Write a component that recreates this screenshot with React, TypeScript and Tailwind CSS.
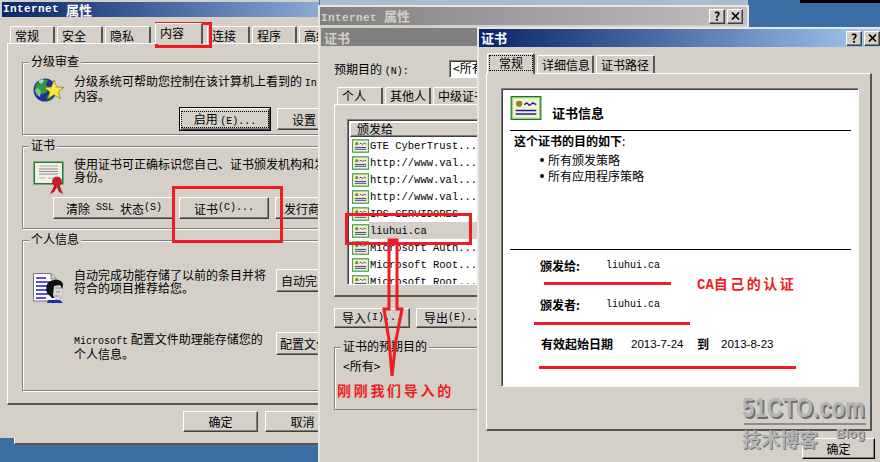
import type { ReactNode } from "react";

const raised =
  "bg-[#d4d0c8] border-t border-l border-t-white border-l-white border-r border-b border-r-[#404040] border-b-[#404040] shadow-[inset_-1px_-1px_0_#808080]";
const etched =
  "border border-[#808080] shadow-[1px_1px_0_#fff,inset_1px_1px_0_#fff]";
const sunken =
  "bg-white border-t border-l border-t-[#808080] border-l-[#808080] border-r border-b border-r-white border-b-white shadow-[inset_1px_1px_0_#404040]";

// latin text in the old dialogs is narrower than the CJK text around it
function L({ children }: { children: ReactNode }) {
  return <span className="font-['Liberation_Mono',monospace] text-[10px] leading-none">{children}</span>;
}

function Btn({ children, className = "" }: { children: ReactNode; className?: string }) {
  return (
    <div className={`${raised} flex shrink-0 items-center justify-center whitespace-nowrap text-[12px] text-black ${className}`}>
      {children}
    </div>
  );
}

function Tab({ children, active, className = "" }: { children: ReactNode; active?: boolean; className?: string }) {
  return (
    <div
      className={`flex shrink-0 items-center justify-start whitespace-nowrap rounded-t-[2px] border-t border-l border-t-white border-l-white border-r-2 border-r-[#555] bg-[#d4d0c8] pl-[4px] text-[12px] text-black ${
        active ? "relative z-10 -mb-[1px] h-[21px] pb-[3px]" : "h-[17px]"
      } ${className}`}
    >
      {children}
    </div>
  );
}

function Group({ title, className = "", children }: { title: string; className?: string; children: ReactNode }) {
  return (
    <div className={`relative shrink-0 ${etched} ${className}`}>
      <span className="absolute -top-[9px] left-[6px] whitespace-nowrap bg-[#d4d0c8] px-[2px] text-[12px] leading-[14px] text-black">
        {title}
      </span>
      {children}
    </div>
  );
}

function TitleButtons() {
  return (
    <div className="flex gap-[2px]">
      <Btn className="h-[15px] w-[16px] text-[11px] font-bold">?</Btn>
      <Btn className="h-[15px] w-[16px]">
        <svg width="9" height="8" viewBox="0 0 9 8" stroke="#000" strokeWidth="1.6">
          <path d="M1 0.5 8 7.5M8 0.5 1 7.5" />
        </svg>
      </Btn>
    </div>
  );
}

function GlobeIcon() {
  return (
    <svg width="32" height="26" viewBox="0 0 32 26">
      <circle cx="12" cy="13" r="11.5" fill="#1c2f9c" />
      <path d="M3 7 9 2l6 1-2 5 3 3-3 5-5 1-3-3-3-2z" fill="#2e9a3a" />
      <path d="M1.500 13 5 11l3 3-1 6-3-2z" fill="#7ec87a" />
      <path d="M5 4l4-2 2 2-3 3z" fill="#b8c8e8" />
      <path d="M13 19l6-2 1 4-6 3z" fill="#0d7a2a" />
      <path
        d="M21 3l2.700 7 7.300.4-5.700 4.400 2 7-6.300-4-6.300 4 2-7-5.700-4.400 7.300-.4z"
        fill="#f6e93a"
        stroke="#6a6a20"
        strokeWidth="0.6"
      />
    </svg>
  );
}

function CertIcon() {
  return (
    <svg width="32" height="34" viewBox="0 0 32 34">
      <rect x="0.500" y="0.500" width="30" height="23" fill="#1e7d32" />
      <rect x="2" y="2" width="27" height="20" fill="#f2f0e6" />
      <path d="M6 5h19" stroke="#a8a8a8" />
      <path d="M6 8h19M6 10.500h19M6 13h19" stroke="#8a8a8a" />
      <path d="M6 17h6M15 17h6" stroke="#b0b0b0" />
      <path d="M17 33l5-10 3 1-4 7zM30 33l-4-10-3 1 3 7z" fill="#c3122a" />
      <circle cx="24" cy="20.500" r="4.500" fill="#d8152e" stroke="#7d0a18" strokeWidth="0.6" />
    </svg>
  );
}

function ProfileIcon() {
  return (
    <svg width="32" height="31" viewBox="0 0 32 31">
      <path d="M0.500.5H18l5 5V28H.5z" fill="#fff" stroke="#777" />
      <path d="M18 .5V6h5" fill="#d0d0d0" stroke="#777" />
      <path d="M3 5h10M3 9h14M3 13h14M3 17h14M3 21h14M3 25h10" stroke="#1a1ae0" strokeWidth="1.400" />
      <path d="M15 27l-1 3h16l-3-3z" fill="#1c2fa8" />
      <path d="M14 20c-2-7 0-12 7-13 6-1 9 2 9 5l-2 13h-9z" fill="#111" />
      <path d="M21 13c2 0 4-1 6-1l3 5-1 1 0 5-3 3h-4l-2-4z" fill="#d8d8d8" />
      <path d="M22 15h6M23 19h4M22 23h4" stroke="#8a8a8a" />
    </svg>
  );
}

function SmallCert({ w = 17, h = 14 }: { w?: number; h?: number }) {
  return (
    <svg width={w} height={h} viewBox="0 0 18 14" className="shrink-0">
      <rect width="18" height="14" fill="#0d7d1d" />
      <rect x="1" y="1" width="16" height="12" fill="#f4f4c8" stroke="#9fd08f" strokeWidth="0.700" />
      <circle cx="5" cy="4.500" r="1.800" fill="#86862a" />
      <path d="M8 5l1.500-1 1.500 1.500L13 4l2 1" stroke="#1a1ab0" fill="none" strokeWidth="0.800" />
      <path d="M3 8.500h12M3 10.500h12" stroke="#1a1ab0" strokeWidth="0.900" />
    </svg>
  );
}

function ContentWindow() {
  return (
    <div className="absolute left-0 top-0 flex h-[438px] w-[319px] flex-col overflow-hidden border-l-2 border-l-[#d4d0c8] bg-[#d4d0c8] pt-[2px] text-[12px] leading-[13px] text-black">
      <div className="flex h-[15px] shrink-0 items-center bg-linear-to-r from-[#0a246a] to-[#8ca9d3] pb-[1px] pl-[1px] text-[13px] font-bold text-white">
        <span className="font-['Liberation_Mono',monospace] text-[11px] tracking-[0.4px]">Internet</span>
        <span className="ml-[7px]">属性</span>
      </div>
      <div className="flex h-[26px] shrink-0 items-end gap-[2px] pl-[8px]">
        <Tab className="w-[45px]">常规</Tab>
        <Tab className="w-[46px]">安全</Tab>
        <Tab className="mr-[2px] w-[46px]">隐私</Tab>
        <Tab active className="w-[48px]">内容</Tab>
        <Tab className="ml-[2px] w-[43px]">连接</Tab>
        <Tab className="w-[45px]">程序</Tab>
        <Tab className="w-[46px]">高级</Tab>
      </div>
      <div className="ml-[5px] flex h-[362px] w-[340px] shrink-0 flex-col border-t border-l border-t-white border-l-white border-b-2 border-b-[#555] px-[14px]">
        <Group title="分级审查" className="mt-[18px] h-[73px]">
          <div className="flex pl-[10px] pt-[11px]">
            <div className="mt-[3px] h-[23px] w-[41px] shrink-0">
              <GlobeIcon />
            </div>
            <p className="w-[250px] shrink-0">
              分级系统可帮助您控制在该计算机上看到的 <L>In</L>
              <br />
              内容。
            </p>
          </div>
          <div className="mt-[6px] flex gap-[7px] pl-[157px]">
            <Btn className="h-[22px] w-[90px] outline outline-1 outline-black">
              <span className="border border-dotted border-black px-[12px] leading-[14px]">
                启用 <L>(E)...</L>
              </span>
            </Btn>
            <Btn className="h-[22px] w-[54px] text-[#808080]">设置</Btn>
          </div>
        </Group>
        <Group title="证书" className="mt-[11px] h-[83px]">
          <div className="flex pl-[10px] pt-[10px]">
            <div className="mt-[4px] h-[22px] w-[41px] shrink-0">
              <CertIcon />
            </div>
            <p className="w-[250px] shrink-0 whitespace-nowrap">
              使用证书可正确标识您自己、证书颁发机构和发
              <br />
              身份。
            </p>
          </div>
          <div className="mt-[14px] flex gap-[4px] pl-[30px]">
            <Btn className="h-[22px] w-[122px]">
              清除 <L>&nbsp;SSL&nbsp;</L> 状态 <L>(S)</L>
            </Btn>
            <Btn className="h-[22px] w-[90px]">
              证书 <L>(C)...</L>
            </Btn>
            <Btn className="ml-[2px] h-[22px] w-[80px] justify-start pl-[8px]">发行商</Btn>
          </div>
        </Group>
        <Group title="个人信息" className="mt-[11px] h-[151px]">
          <div className="flex pl-[10px] pt-[27px]">
            <div className="mt-[5px] h-[21px] w-[41px] shrink-0">
              <ProfileIcon />
            </div>
            <p className="w-[202px] shrink-0 whitespace-nowrap">
              自动完成功能存储了以前的条目并将
              <br />
              符合的项目推荐给您。
            </p>
            <Btn className="mt-[1px] h-[23px] w-[80px] justify-start pl-[4px]">自动完成</Btn>
          </div>
          <div className="flex pl-[51px] pt-[38px]">
            <p className="w-[202px] shrink-0 whitespace-nowrap">
              <L>Microsoft</L> 配置文件助理能存储您的
              <br />
              个人信息。
            </p>
            <Btn className="h-[23px] w-[80px] justify-start pl-[3px]">配置文件</Btn>
          </div>
        </Group>
      </div>
      <div className="flex gap-[7px] pl-[181px] pt-[6px]">
        <Btn className="h-[21px] w-[75px]">确定</Btn>
        <Btn className="h-[21px] w-[75px]">取消</Btn>
      </div>
    </div>
  );
}

const certRows = [
  "GTE CyberTrust...",
  "http://www.val...",
  "http://www.val...",
  "http://www.val...",
  "IPS SERVIDORES",
  "liuhui.ca",
  "Microsoft Auth...",
  "Microsoft Root...",
  "Microsoft Root...",
];

function CertListWindow() {
  return (
    <div className="absolute left-[318px] top-[5px] flex h-[457px] w-[431px] flex-col overflow-hidden border-x-2 border-t-2 border-x-[#e8e6e0] border-t-[#e8e6e0] bg-[#d4d0c8] text-[12px] leading-[14px] text-black">
      <div className="flex h-[18px] shrink-0 items-center justify-between bg-linear-to-r from-[#808080] to-[#c0c0c0] pl-[1px] pr-[4px]">
        <span className="pt-[1px] text-[13px] font-bold text-[#d4d0c8]">
          <span className="font-['Liberation_Mono',monospace] text-[11px] tracking-[0.4px]">Internet</span>
          <span className="ml-[7px]">属性</span>
        </span>
        <TitleButtons />
      </div>
      <div className="ml-[1px] mt-[3px] flex h-[18px] w-[156px] shrink-0 items-center bg-[#808080] pl-[3px] pt-[1px] text-[13px] font-bold text-[#d4d0c8]">
        证书
      </div>
      <div className="flex w-[160px] shrink-0 flex-col overflow-hidden pl-[14px]">
        <div className="mt-[14px] flex h-[18px] items-center gap-[27px]">
          <span className="w-[88px] shrink-0 whitespace-nowrap">
            预期目的 <L>(N):</L>
          </span>
          <div className={`${sunken} h-[18px] w-[60px] shrink-0 whitespace-nowrap pl-[3px]`}>&lt;所有&gt;</div>
        </div>
        <div className="ml-[3px] mt-[8px] flex h-[18px] items-end gap-[2px]">
          <Tab className="w-[46px]">个人</Tab>
          <Tab className="w-[46px]">其他人</Tab>
          <Tab className="w-[60px]">中级证书</Tab>
        </div>
        <div className="flex h-[193px] w-[190px] shrink-0 flex-col border-t border-l border-t-white border-l-white border-b-2 border-b-[#555] pl-[12px] pt-[14px]">
          <div className={`${sunken} h-[166px] w-[170px] overflow-hidden pl-[2px] pt-[2px]`}>
            <div className={`${raised} flex h-[15px] items-center pb-[2px] pl-[6px]`}>颁发给</div>
            {certRows.map((name, i) => (
              <div key={i} className="flex h-[17px] items-center pl-[2px]">
                <SmallCert />
                <span
                  className={`flex h-[17px] flex-1 items-center whitespace-nowrap pl-[1px] font-['Liberation_Mono',monospace] text-[10.500px] ${
                    name === "liuhui.ca" ? "bg-[#d4d0c8]" : ""
                  }`}
                >
                  {name}
                </span>
              </div>
            ))}
          </div>
        </div>
        <div className="mt-[11px] flex gap-[6px]">
          <Btn className="h-[20px] w-[76px]">
            导入 <L>(I)...</L>
          </Btn>
          <Btn className="h-[20px] w-[76px]">
            导出 <L>(E)...</L>
          </Btn>
        </div>
        <Group title="证书的预期目的" className="mt-[19px] h-[63px] w-[180px]">
          <p className="pl-[8px] pt-[11px]">&lt;所有&gt;</p>
        </Group>
      </div>
    </div>
  );
}

function DetailWindow() {
  return (
    <div className="absolute left-[477px] top-[27px] flex h-[435px] w-[403px] flex-col overflow-hidden border-l-2 border-t-2 border-l-[#e8e6e0] border-t-[#e8e6e0] bg-[#d4d0c8] text-[12px] leading-[14px] text-black">
      <div className="flex h-[18px] shrink-0 items-center justify-between bg-linear-to-r from-[#0a246a] to-[#a6caf0] pl-[2px] pr-0">
        <span className="text-[13px] font-bold text-white">证书</span>
        <TitleButtons />
      </div>
      <div className="flex h-[26px] shrink-0 items-end gap-[2px] pl-[8px]">
        <Tab active className="w-[48px] !pl-[1px] !pb-[2px]">
          <span className="flex h-[16px] w-[44px] justify-center border border-dotted border-black">常规</span>
        </Tab>
        <Tab className="h-[18px] w-[57px]">详细信息</Tab>
        <Tab className="h-[18px] w-[59px]">证书路径</Tab>
      </div>
      <div className="ml-[7px] flex h-[358px] w-[386px] shrink-0 flex-col border-t border-l border-b-2 border-r-2 border-t-white border-l-white border-b-[#555] border-r-[#555] pl-[14px] pt-[14px]">
        <div className={`${sunken} flex h-[299px] w-[358px] flex-col px-[8px] pt-[7px]`}>
          <div className="flex h-[34px] items-start">
            <SmallCert w={32} h={24} />
            <span className="ml-[10px] mt-[10px] text-[13px] font-bold">证书信息</span>
          </div>
          <div className="h-[1px] w-[341px] bg-black" />
          <p className="ml-[4px] mt-[3px] font-bold">
            这个证书的目的如下<span className="font-normal">:</span>
          </p>
          <ul className="ml-[30px] mt-[5px] flex flex-col gap-[2px]">
            <li className="flex h-[14px] items-center gap-[4px]">
              <span className="size-[4px] rounded-full bg-black" />
              所有颁发策略
            </li>
            <li className="flex h-[14px] items-center gap-[4px]">
              <span className="size-[4px] rounded-full bg-black" />
              所有应用程序策略
            </li>
          </ul>
          <div className="mt-[66px] h-[1px] w-[341px] bg-black" />
          <div className="ml-[30px] mt-[9px] flex items-center">
            <span className="w-[66px] font-bold">颁发给:</span>
            <L>liuhui.ca</L>
          </div>
          <div className="ml-[30px] mt-[25px] flex items-center">
            <span className="w-[66px] font-bold">颁发者:</span>
            <L>liuhui.ca</L>
          </div>
          <div className="ml-[31px] mt-[25px] flex items-center">
            <span className="w-[90px] font-bold">有效起始日期</span>
            <span className="w-[66px] font-['Liberation_Sans',sans-serif] text-[11.500px]">2013-7-24</span>
            <span className="w-[24px] font-bold">到</span>
            <span className="font-['Liberation_Sans',sans-serif] text-[11.500px]">2013-8-23</span>
          </div>
        </div>
      </div>
      <div className="flex justify-end pr-[5px] pt-[7px]">
        <Btn className="h-[21px] w-[73px] border-l-black border-t-black border-r-black border-b-black">确定</Btn>
      </div>
    </div>
  );
}

// red marks someone painted over the screenshot, plus the site watermark
function Annotations() {
  const red = "absolute bg-[#ee1c25]";
  return (
    <>
      <div className="absolute left-[155px] top-[22px] h-[26px] w-[57px] border-[3px] border-[#ee1c25]" />
      <div className="absolute left-[172px] top-[186px] h-[57px] w-[111px] border-[3px] border-[#ee1c25]" />
      <div className="absolute left-[345px] top-[213px] h-[32px] w-[127px] border-[3px] border-[#ee1c25]" />
      <svg className="absolute left-[380px] top-[238px]" width="28" height="142" viewBox="0 0 28 142" fill="none" stroke="#ee1c25" strokeWidth="3">
        <path d="M9 2V71H4L9 102 12 138 16 102 22 71H17V2Z" />
        <path d="M9 3H17" strokeWidth="4" />
      </svg>
      <div className={`${red} left-[544px] top-[282px] h-[3px] w-[127px]`} />
      <div className={`${red} left-[534px] top-[322px] h-[3px] w-[156px]`} />
      <div className={`${red} left-[539px] top-[366px] h-[3px] w-[257px]`} />
      <span className="absolute left-[697px] top-[274px] whitespace-nowrap text-[14px] font-bold leading-[18px] tracking-[2.500px] text-[#ee1c25]">
        <span className="font-['Liberation_Mono',monospace] tracking-normal">CA</span>自己的认证
      </span>
      <span className="absolute left-[337px] top-[381px] whitespace-nowrap text-[14px] font-bold leading-[18px] tracking-[2.700px] text-[#ee1c25]">
        刚刚我们导入的
      </span>
      <span className="absolute left-[742px] top-[392px] origin-left scale-x-[0.82] whitespace-nowrap font-['Liberation_Sans',sans-serif] text-[27px] font-bold leading-[32px] text-[#b4b4b4] [text-shadow:2px_2px_0_#707070]">
        51CTO.com
      </span>
      <div className="absolute left-[744px] top-[423px] h-[2px] w-[122px] bg-[#8c8c8c]" />
      <span className="absolute left-[742px] top-[428px] whitespace-nowrap text-[19px] font-bold leading-[22px] text-[#b4b4b4] [text-shadow:1px_1px_0_#707070]">
        技术博客
      </span>
      <span className="absolute left-[836px] top-[426px] whitespace-nowrap font-['Liberation_Sans',sans-serif] text-[13px] font-bold leading-[16px] text-[#b4b4b4] [text-shadow:1px_1px_0_#707070]">
        Blog
      </span>
    </>
  );
}

export default function App() {
  return (
    <div className="relative h-[462px] w-[880px] overflow-hidden bg-[#3a6ea5] font-['Noto_Sans_CJK_SC',sans-serif]">
      {/* leftovers of whatever sits behind the dialogs */}
      <div className="absolute left-[320px] top-0 h-[5px] w-[428px] bg-[#a8bcd4]" />
      <div className="absolute right-0 top-0 h-[3px] w-[80px] bg-black" />
      <div className="absolute left-[14px] top-[400px] h-[45px] w-[306px] border-b-2 border-l border-b-[#555] border-l-white bg-[#d4d0c8]" />
      <ContentWindow />
      <CertListWindow />
      <DetailWindow />
      <Annotations />
    </div>
  );
}
